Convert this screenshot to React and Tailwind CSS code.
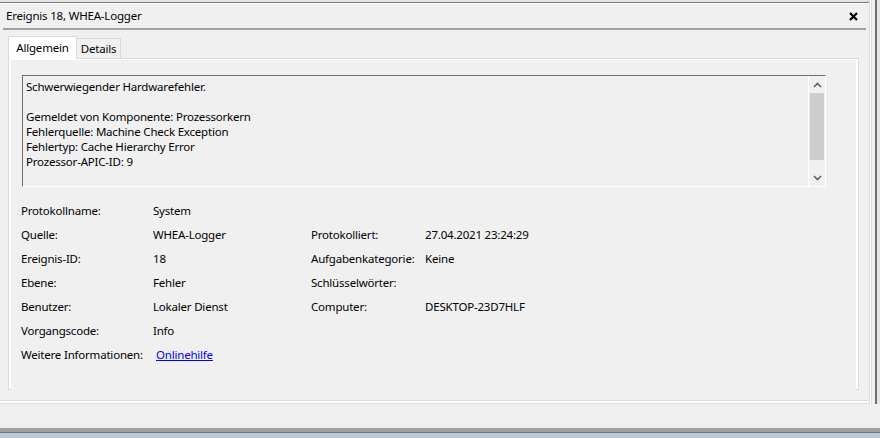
const FONT = "font-['Noto_Sans','Open_Sans',sans-serif]";

const MESSAGE = [
  "Schwerwiegender Hardwarefehler.",
  "",
  "Gemeldet von Komponente: Prozessorkern",
  "Fehlerquelle: Machine Check Exception",
  "Fehlertyp: Cache Hierarchy Error",
  "Prozessor-APIC-ID: 9",
];

const ROWS = [
  ["Protokollname:", "System", "", ""],
  ["Quelle:", "WHEA-Logger", "Protokolliert:", "27.04.2021 23:24:29"],
  ["Ereignis-ID:", "18", "Aufgabenkategorie:", "Keine"],
  ["Ebene:", "Fehler", "Schlüsselwörter:", ""],
  ["Benutzer:", "Lokaler Dienst", "Computer:", "DESKTOP-23D7HLF"],
  ["Vorgangscode:", "Info", "", ""],
];

function Chevron({ up }) {
  return (
    <svg width="9" height="6" viewBox="0 0 9 6" className="block">
      <path
        d={up ? "M1 5 L4.5 1.5 L8 5" : "M1 1 L4.5 4.5 L8 1"}
        fill="none"
        stroke="#606060"
        strokeWidth="1.6"
      />
    </svg>
  );
}

function MessageBox() {
  return (
    <div className="ml-[11px] mt-[15px] w-[804px] h-[112px] flex border-t border-l border-t-[#6d6d6d] border-l-[#6d6d6d] border-r border-b border-r-white border-b-white">
      <div className="flex-1 pl-[3px] pt-[3px] text-[11.5px] tracking-[-0.2px] leading-[15px] text-black">
        {MESSAGE.map((l, i) => (
          <div key={i} className="h-[15px] whitespace-pre">
            {l}
          </div>
        ))}
      </div>
      <div className="w-[17px] flex flex-col border-l border-white bg-[#f0f0f0]">
        <div className="h-[17px] flex items-center justify-center">
          <Chevron up />
        </div>
        <div className="h-[67px] mx-px bg-[#cdcdcd]" />
        <div className="flex-1" />
        <div className="h-[17px] flex items-center justify-center">
          <Chevron />
        </div>
      </div>
    </div>
  );
}

function Fields() {
  return (
    <div className="mt-[12px] ml-[10px] text-[11.5px] tracking-[-0.2px] text-black">
      {ROWS.map(([l1, v1, l2, v2]) => (
        <div key={l1} className="h-[24px] flex items-center">
          <span className="w-[132px]">{l1}</span>
          <span className="w-[158px]">{v1}</span>
          <span className="w-[114px]">{l2}</span>
          <span>{v2}</span>
        </div>
      ))}
      <div className="h-[24px] flex items-center">
        <span className="w-[135px]">Weitere Informationen:</span>
        <a href="#" className="text-[#0000ff] underline">
          Onlinehilfe
        </a>
      </div>
    </div>
  );
}

export default function App() {
  return (
    <div className={`w-[880px] h-[438px] bg-[#f0f0f0] overflow-hidden flex flex-col ${FONT}`}>
      <div className="h-[404px] flex">
        <div className="w-[869px] flex flex-col">
          <div className="h-[2px] bg-[#e2e2e2]" />
          <div className="h-px bg-[#7a7a7a]" />
          <div className="h-px bg-white" />
          <div className="h-[24px] flex items-center justify-between pl-[6px] pr-[11px]">
            <span className="text-[11.5px] tracking-[-0.2px] text-black">Ereignis 18, WHEA-Logger</span>
            <svg width="9" height="9" viewBox="0 0 9 9">
              <path d="M1 1 L8 8 M8 1 L1 8" stroke="#000" strokeWidth="2.2" />
            </svg>
          </div>
          <div className="mx-[3px] h-[2px] bg-[#a0a0a0]" />
          <div className="h-[6px]" />
          <div className="flex items-end pl-[8px] text-[11.5px] tracking-[-0.2px] text-black">
            <div className="h-[23px] w-[69px] bg-white border border-b-0 border-[#d9d9d9] flex items-start justify-center pt-[2px] relative z-10 -mb-px">
              Allgemein
            </div>
            <div className="h-[20px] w-[44px] border border-l-0 border-b-0 border-[#d9d9d9] flex items-center justify-center">
              Details
            </div>
          </div>
          <div className="ml-[8px] w-[851px] h-[332px] border border-[#d9d9d9] bg-white">
            <div className="h-full mx-[2px] mb-[2px] mt-px bg-[#f0f0f0] flex flex-col">
              <MessageBox />
              <Fields />
            </div>
          </div>
          <div className="flex-1" />
          <div className="h-px bg-[#dcdcdc]" />
          <div className="h-[2px] bg-white" />
          <div className="h-px bg-[#dcdcdc]" />
        </div>
        <div className="w-[11px] flex">
          <div className="w-px bg-[#dcdcdc]" />
          <div className="w-px bg-white" />
          <div className="w-px bg-[#dcdcdc]" />
          <div className="w-[3px]" />
          <div className="w-[2px] bg-[#6e6e6e]" />
          <div className="w-[3px] bg-[#e4e4e4]" />
        </div>
      </div>
      <div className="h-[24px]" />
      <div className="h-[4px] bg-[#a0a0a0]" />
      <div className="h-px bg-[#6f7780]" />
      <div className="flex-1 bg-[#bccad6]" />
    </div>
  );
}
